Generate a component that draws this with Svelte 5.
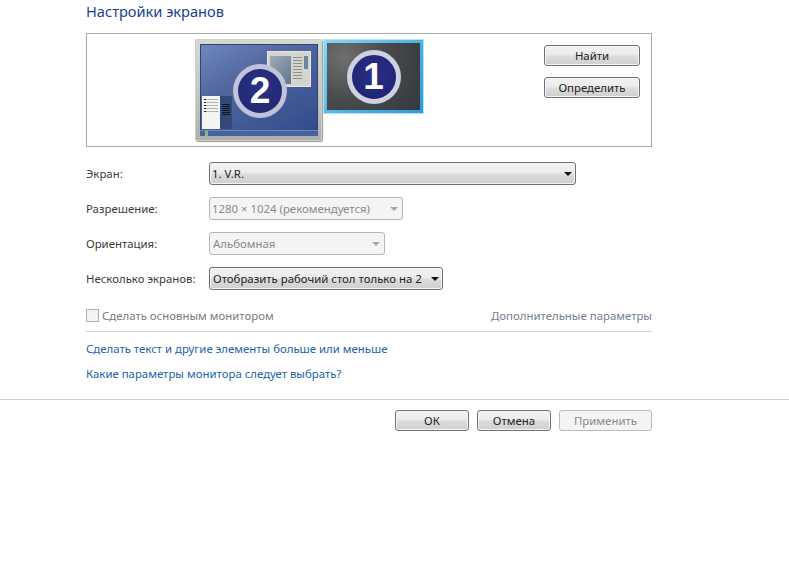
<script>
  const rows = [
    { label: 'Экран:', value: '1. V.R.', cls: 'w-screen', disabled: false, tight: true },
    { label: 'Разрешение:', value: '1280 × 1024 (рекомендуется)', cls: 'w-res', disabled: true, tight: true },
    { label: 'Ориентация:', value: 'Альбомная', cls: 'w-orient', disabled: true },
    { label: 'Несколько экранов:', value: 'Отобразить рабочий стол только на 2', cls: 'w-multi', disabled: false }
  ]
</script>

<div class="page">
  <div class="content">
    <h1>Настройки экранов</h1>

    <div class="preview">
      <div class="monitors">
        <div class="monitor two">
          <div class="screen blue">
            <div class="win">
              <div class="win-side"></div>
              <div class="win-lines"><i></i><i></i><i></i><i></i><i></i><i></i><i></i><i></i></div>
              <div class="win-bar"></div>
            </div>
            <div class="start">
              <div class="start-left"><i></i><i></i><i></i><i></i><i></i></div>
              <div class="start-right"><i></i><i></i><i></i><i></i><i></i><i></i></div>
            </div>
            <div class="taskbar"><span></span></div>
            <div class="badge big">2</div>
          </div>
        </div>
        <div class="monitor one">
          <div class="screen dark">
            <div class="badge">1</div>
          </div>
        </div>
      </div>
      <div class="side-buttons">
        <button class="btn">Найти</button>
        <button class="btn">Определить</button>
      </div>
    </div>

    <div class="form">
      {#each rows as row}
        <div class="label">{row.label}</div>
        <div class="select {row.cls}" class:disabled={row.disabled}>
          <span class:tight={row.tight}>{row.value}</span>
          <svg class="arrow" width="8" height="4" viewBox="0 0 8 4"><path d="M0 0h8L4 4z" /></svg>
        </div>
      {/each}
    </div>

    <div class="options">
      <label class="check"><span class="box"></span>Сделать основным монитором</label>
      <span class="muted-link">Дополнительные параметры</span>
    </div>

    <div class="links">
      <div class="link">Сделать текст и другие элементы больше или меньше</div>
      <div class="link">Какие параметры монитора следует выбрать?</div>
    </div>
  </div>

  <div class="footer">
    <button class="btn foot">ОК</button>
    <button class="btn foot">Отмена</button>
    <button class="btn foot apply" disabled>Применить</button>
  </div>
</div>

<style>
  :global(body) {
    margin: 0;
    background: #fff;
  }

  .page {
    width: 789px;
    height: 586px;
    overflow: hidden;
    font-family: "Noto Sans", "Open Sans", sans-serif;
    font-size: 11.4px;
    color: #333;
  }

  .content {
    width: 566px;
    margin-left: 86px;
  }

  h1 {
    margin: 0;
    padding-top: 1px;
    height: 33px;
    box-sizing: border-box;
    font-size: 14.6px;
    line-height: 20px;
    font-weight: 400;
    color: #1a3f8f;
  }

  .preview {
    box-sizing: border-box;
    height: 114px;
    border: 1px solid #aaa;
    display: flex;
    justify-content: space-between;
    padding: 5px 11px 0 108px;
  }

  .monitors {
    display: flex;
    align-items: flex-start;
    gap: 1px;
  }

  .monitor {
    box-sizing: border-box;
  }

  .monitor.two {
    width: 127px;
    height: 102px;
    padding: 5px 4px 5px 5px;
    background: linear-gradient(180deg, #d8d8d2, #c4c4bf 60%, #aeaea9);
    border-radius: 2px;
    box-shadow: inset 0 0 0 1px #cfcfca, 1px 1px 1px #999;
  }

  .monitor.one {
    width: 101px;
    height: 75px;
    padding: 4px 4px 4px 4px;
    background: linear-gradient(135deg, #8fd6f4, #4cb3e4 55%, #2a9bd6);
    box-shadow: inset 0 0 0 1px #b3e2f7;
    border-radius: 1px;
  }

  .screen {
    position: relative;
    width: 100%;
    height: 100%;
    display: flex;
    align-items: center;
    justify-content: center;
  }

  .screen.blue {
    background: linear-gradient(150deg, #7088bd 0%, #52689f 35%, #2f4a8c 100%);
    box-shadow: inset 0 0 0 1px #2e4277;
  }

  .screen.dark {
    background: radial-gradient(circle at 18% 22%, #6f6f6f 0%, #484a4d 45%, #36393c 100%);
  }

  .badge {
    position: relative;
    box-sizing: border-box;
    width: 54px;
    height: 54px;
    border-radius: 50%;
    border: 5px solid #cfd0e0;
    background: radial-gradient(circle at 50% 40%, #2a2f86, #1c2170);
    color: #fff;
    font-family: "Liberation Sans", Arial, sans-serif;
    font-weight: 700;
    font-size: 37px;
    line-height: 43px;
    text-align: center;
  }

  .badge.big {
    margin: 1px 0 0 2px;
    background: radial-gradient(circle at 50% 40%, #2b3184, #20266f);
    border-color: rgba(214, 216, 232, 0.88);
  }

  .win {
    position: absolute;
    top: 7px;
    right: 7px;
    width: 44px;
    height: 36px;
    display: flex;
    gap: 2px;
    padding: 4px 2px 2px;
    box-sizing: border-box;
    background: #d6d4ce;
    border: 1px solid #e6e5e0;
  }

  .win-side {
    width: 22px;
    background: linear-gradient(135deg, #a0aab4, #5d7690);
  }

  .win-lines {
    width: 9px;
    display: flex;
    flex-direction: column;
    justify-content: space-between;
    padding: 1px 0 5px;
  }

  .win-lines i {
    display: block;
    height: 1px;
    background: #8f8f8f;
  }

  .win-bar {
    width: 4px;
    height: 13px;
    background: #6d86a0;
  }

  .start {
    position: absolute;
    left: 2px;
    bottom: 7px;
    width: 30px;
    height: 33px;
    display: flex;
    background: #334a78;
  }

  .start-left {
    box-sizing: border-box;
    width: 18px;
    height: 100%;
    padding: 3px 2px;
    background: #f4f4f2;
    display: flex;
    flex-direction: column;
    gap: 2px;
  }

  .start-left i {
    display: block;
    height: 1px;
    border-left: 2px solid #222;
    background: #b4b4b4;
  }

  .start-right {
    flex: 1;
    padding: 8px 2px;
    display: flex;
    flex-direction: column;
    gap: 1px;
  }

  .start-right i {
    display: block;
    height: 1px;
    background: #11141d;
  }

  .taskbar {
    position: absolute;
    left: 0;
    right: 0;
    bottom: 0;
    height: 6px;
    background: #46639f;
    border-top: 1px solid #6f88bb;
    box-sizing: border-box;
  }

  .taskbar span {
    display: block;
    width: 3px;
    height: 5px;
    margin-left: 5px;
    background: #7fbf7a;
  }

  .side-buttons {
    display: flex;
    flex-direction: column;
    gap: 11px;
    padding-top: 6px;
  }

  .btn {
    box-sizing: border-box;
    width: 96px;
    height: 21px;
    padding: 0;
    border: 1px solid #707070;
    border-radius: 3px;
    background: linear-gradient(180deg, #f2f2f2 0%, #ebebeb 48%, #dcdcdc 52%, #cfcfcf 100%);
    box-shadow: inset 0 0 0 1px #f6f6f6;
    font: inherit;
    line-height: 18px;
    color: #222;
  }

  .form {
    display: grid;
    grid-template-columns: 123px 1fr;
    grid-auto-rows: 23px;
    row-gap: 12px;
    margin-top: 15px;
    align-items: center;
  }

  .label {
    color: #3a3a3a;
  }

  .select {
    box-sizing: border-box;
    height: 23px;
    display: flex;
    align-items: center;
    justify-content: space-between;
    padding: 0 3px;
    border: 1px solid #707070;
    border-radius: 3px;
    background: linear-gradient(180deg, #f2f2f2 0%, #ebebeb 48%, #dcdcdc 52%, #cfcfcf 100%);
    color: #222;
    box-shadow: inset 0 0 0 1px #f4f4f4;
  }

  .select .tight {
    margin-left: -1px;
  }

  .arrow {
    fill: #111;
  }

  .select.disabled {
    border-color: #b5b5b5;
    background: #f4f4f4;
    color: #8a8a8a;
    box-shadow: none;
  }

  .select.disabled .arrow {
    margin-right: 1px;
    fill: #a5a5a5;
  }

  .w-screen { width: 367px; }
  .w-res { width: 194px; }
  .w-orient { width: 176px; }
  .w-multi { width: 234px; }

  .options {
    display: flex;
    justify-content: space-between;
    align-items: center;
    height: 22px;
    margin-top: 14px;
    padding-bottom: 5px;
    border-bottom: 1px solid #cfcfcf;
    color: #7b7b7b;
  }

  .check {
    display: flex;
    align-items: center;
    gap: 3px;
  }

  .box {
    box-sizing: border-box;
    width: 13px;
    height: 13px;
    border: 1px solid #b0b0b0;
    background: #f3f3f3;
  }

  .muted-link {
    color: #74808f;
  }

  .links {
    display: flex;
    flex-direction: column;
    gap: 8px;
    padding-top: 8px;
  }

  .link {
    height: 17px;
    line-height: 17px;
    color: #1d5fa8;
  }

  .footer {
    display: flex;
    justify-content: flex-end;
    gap: 8px;
    width: 566px;
    margin: 17px 0 0 86px;
    padding: 11px 0 0;
    position: relative;
  }

  .footer::before {
    content: '';
    position: absolute;
    top: 0;
    left: -86px;
    width: 789px;
    border-top: 1px solid #cfcfcf;
  }

  .btn.foot {
    width: 74px;
  }

  .btn.apply {
    width: 93px;
    border-color: #bcbcbc;
    background: #f4f4f4;
    box-shadow: none;
    color: #8a8a8a;
  }
</style>
